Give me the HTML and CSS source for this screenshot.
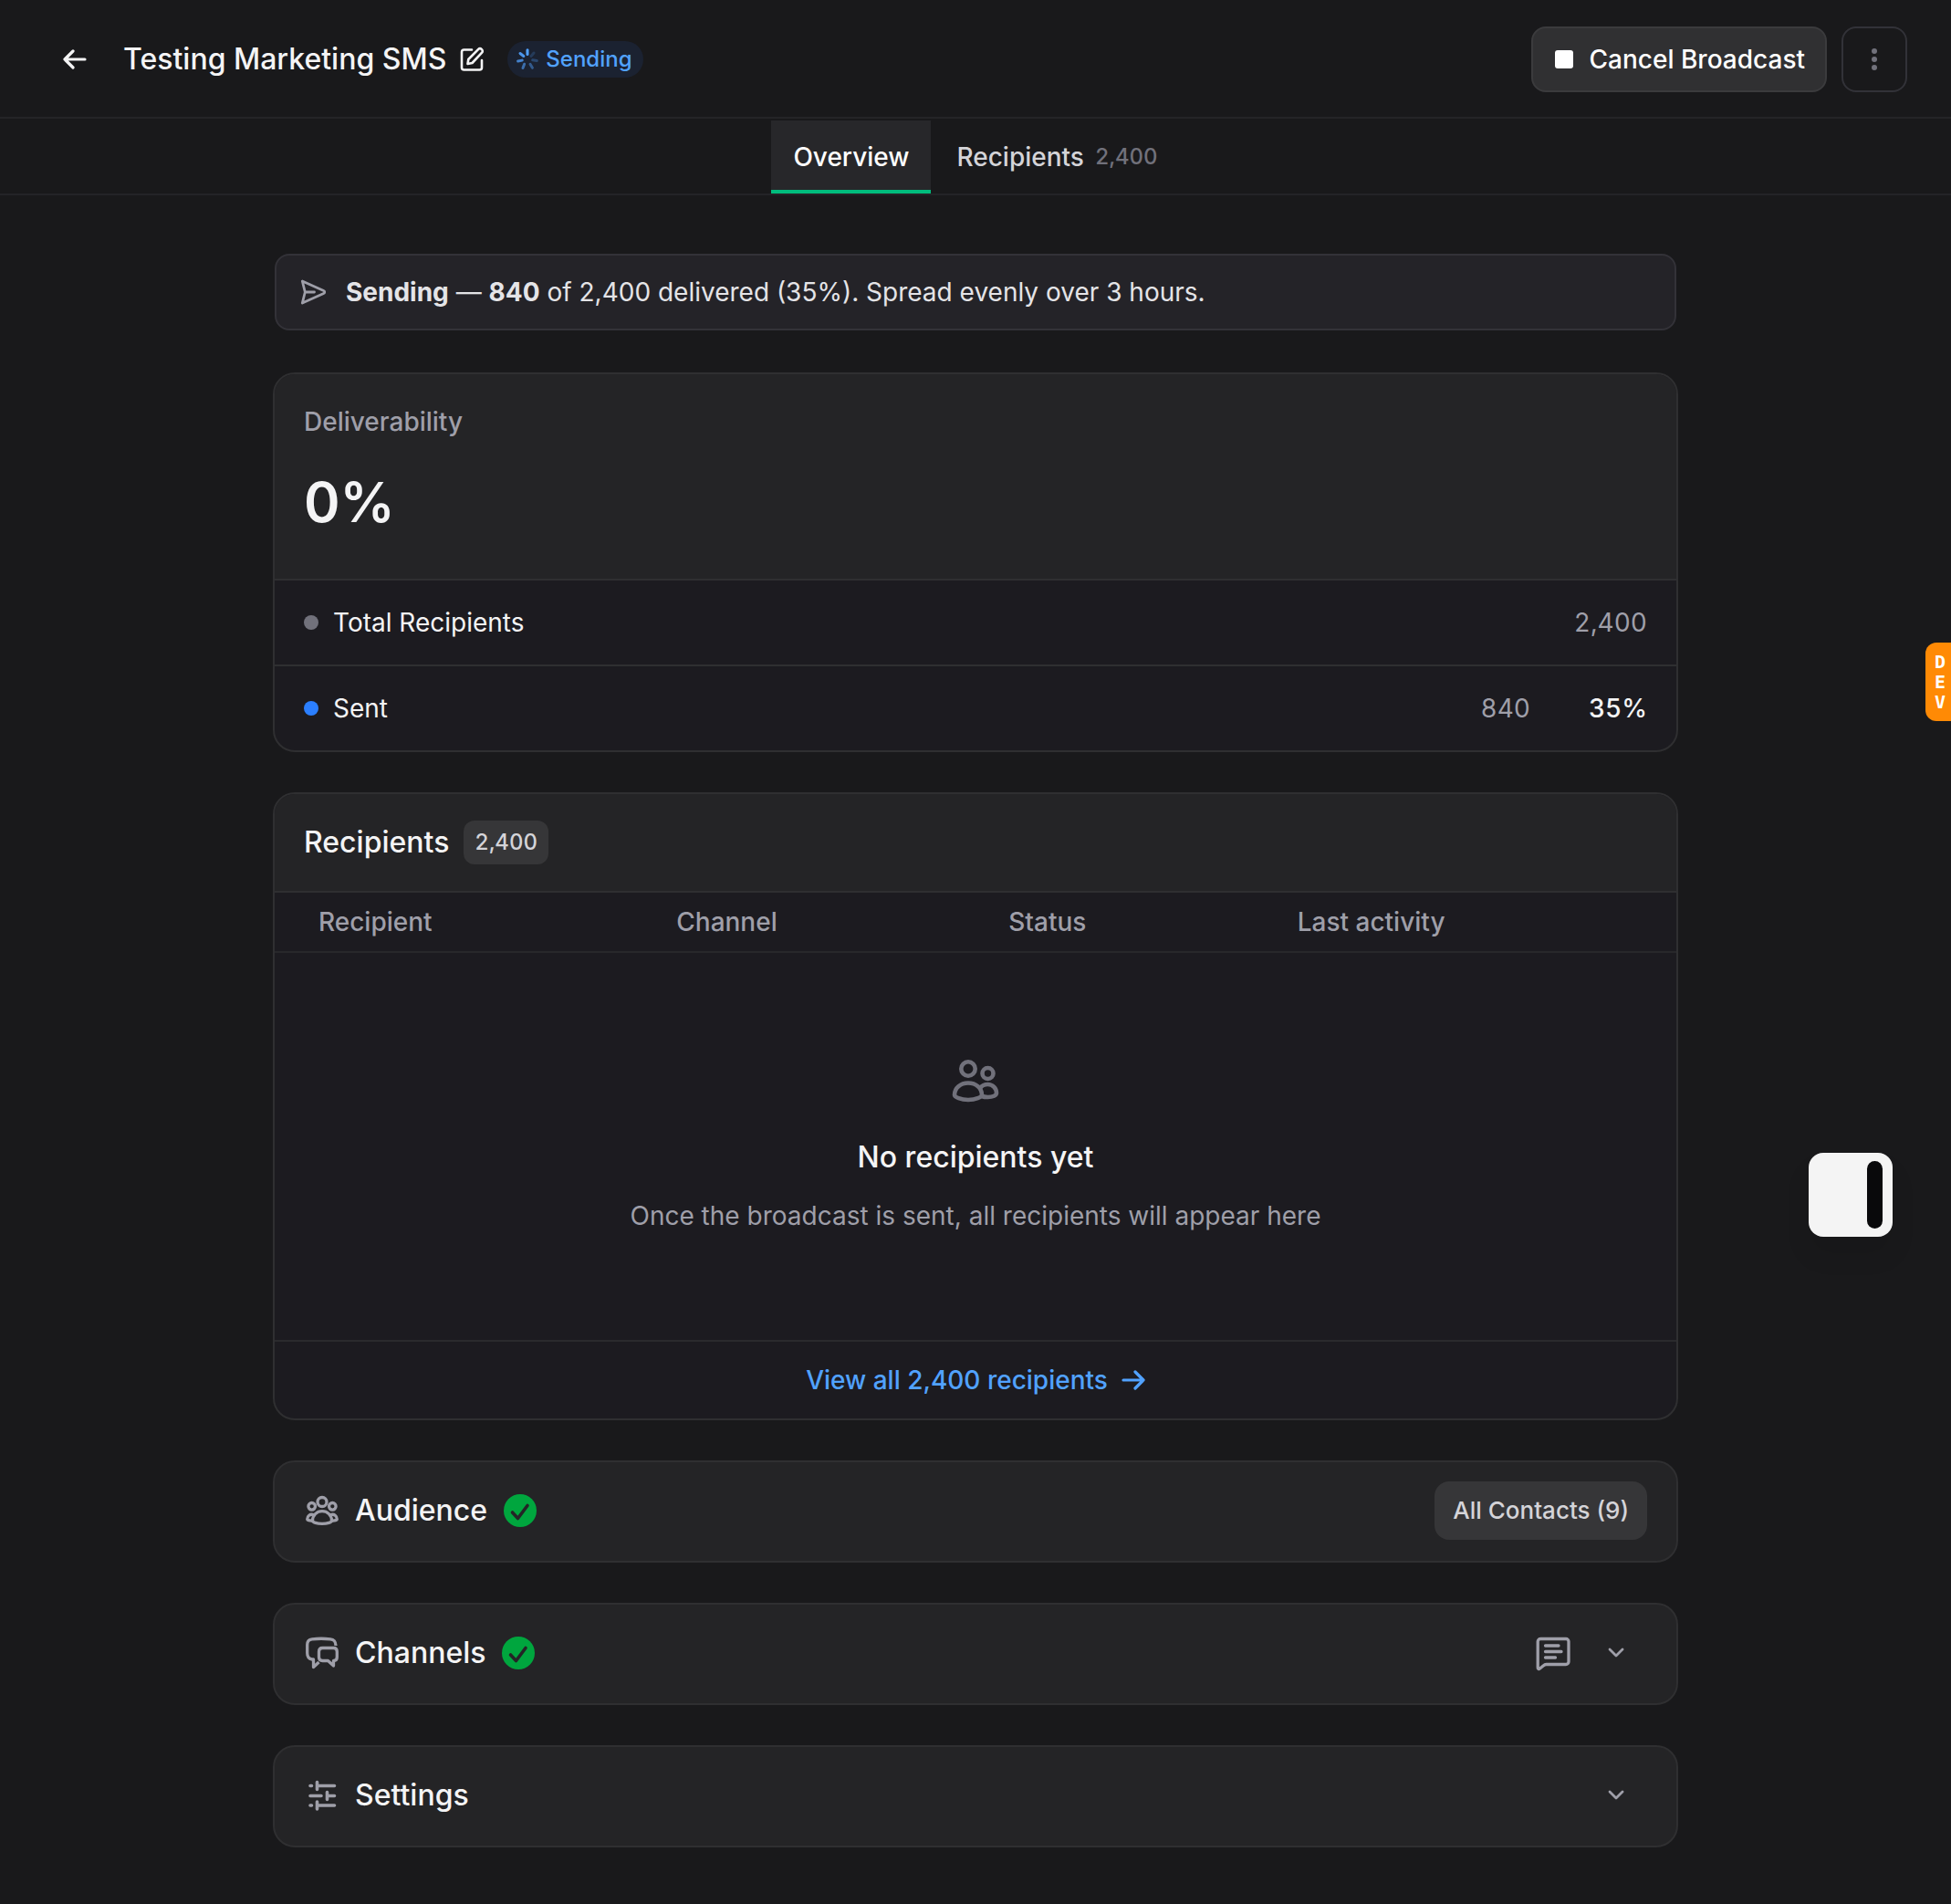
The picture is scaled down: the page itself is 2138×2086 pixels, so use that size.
FILE: index.html
```html
<!DOCTYPE html>
<html lang="en">
  <head>
    <meta charset="utf-8">
    <title>Testing Marketing SMS</title>
    <link rel="stylesheet" href="styles.css">
  </head>
  <body>
    <header class="topbar">
      <a class="back" href="#" aria-label="Back">
        <svg width="26" height="22" viewBox="0 0 26 22" fill="none" stroke="currentColor" stroke-width="3.200" stroke-linecap="round" stroke-linejoin="round"><path d="M24 11H2M11 2L2 11L11 20"/></svg>
      </a>
      <h1 class="page-title">Testing Marketing SMS</h1>
      <button class="edit" type="button" aria-label="Rename">
        <svg width="28" height="28" viewBox="0 0 28 28" fill="none" stroke="currentColor" stroke-width="2.600" stroke-linecap="round" stroke-linejoin="round"><path d="M13 3.500H4.500A2.500 2.500 0 0 0 2 6v17a2.500 2.500 0 0 0 2.500 2.500h17A2.500 2.500 0 0 0 24 23v-8"/><path d="M8.500 19l.8-5L20.300 2.800a2.300 2.300 0 0 1 3.300 0l.5.500a2.300 2.300 0 0 1 0 3.300L13.500 18z"/></svg>
      </button>
      <span class="status">
        <svg width="24" height="24" viewBox="0 0 24 24" fill="none" stroke="currentColor" stroke-width="3" stroke-linecap="round">
          <path d="M12 1.800v4.700"/>
          <path d="M19 5l-3 3.500" opacity=".2"/>
          <path d="M22.300 13.600l-4.600-.8" opacity=".3"/>
          <path d="M17.400 21.300l-2.400-4" opacity=".45"/>
          <path d="M7 21.500l1.600-4.300" opacity=".6"/>
          <path d="M1.600 14l4.600-.9" opacity=".75"/>
          <path d="M4 5.500l3.800 3" opacity=".9"/>
        </svg>
        Sending
      </span>
      <div class="actions">
        <button class="btn btn-cancel" type="button"><span class="stop"></span>Cancel Broadcast</button>
        <button class="btn btn-more" type="button" aria-label="More">
          <svg width="6" height="24" viewBox="0 0 6 24" fill="currentColor"><circle cx="3" cy="3" r="3"/><circle cx="3" cy="12" r="3"/><circle cx="3" cy="21" r="3"/></svg>
        </button>
      </div>
    </header>

    <nav class="tabs">
      <a class="tab active" href="#">Overview</a>
      <a class="tab" href="#">Recipients <span class="tab-count">2,400</span></a>
    </nav>

    <main>
      <div class="alert">
        <svg width="28" height="28" viewBox="0 0 28 28" fill="none" stroke="currentColor" stroke-width="2.800" stroke-linecap="round" stroke-linejoin="round"><path d="M2.300 2l23.400 10.500a1.600 1.600 0 0 1 0 3L2.300 26l3-12zM5.500 14h10"/></svg>
        <p><strong>Sending</strong> — <strong>840</strong> of 2,400 delivered (35%). Spread evenly over 3 hours.</p>
      </div>

      <section class="card">
        <div class="metric">
          <h2 class="metric-label">Deliverability</h2>
          <div class="metric-value">0%</div>
        </div>
        <div class="stat">
          <span class="dot"></span>
          <span>Total Recipients</span>
          <span class="count">2,400</span>
        </div>
        <div class="stat">
          <span class="dot sent"></span>
          <span>Sent</span>
          <span class="count">840</span>
          <span class="percent">35%</span>
        </div>
      </section>

      <section class="card">
        <div class="card-head">
          <h2 class="title">Recipients</h2>
          <span class="badge">2,400</span>
        </div>
        <table>
          <thead>
            <tr>
              <th class="col-recipient">Recipient</th>
              <th class="col-channel">Channel</th>
              <th class="col-status">Status</th>
              <th>Last activity</th>
            </tr>
          </thead>
          <tbody>
            <tr>
              <td colspan="4">
                <div class="empty">
                  <svg width="52" height="48" viewBox="0 0 52 48" fill="none" stroke="currentColor" stroke-width="4.600" stroke-linejoin="round"><circle cx="18" cy="11" r="7.700"/><circle cx="39.500" cy="16" r="6"/><path d="M3 39.500C3 32 9.500 26.500 18 26.500S33 32 33 39.500c0 2.500-7 5.500-15 5.500S3 42 3 39.500z"/><path d="M31 32c1.800-2.300 4.800-4 8.500-4 5.500 0 9.500 4.500 9.500 9.500 0 2.600-4 4.500-9.500 4.500-2.500 0-4.800-.3-6.500-1"/></svg>
                  <h3 class="title">No recipients yet</h3>
                  <p>Once the broadcast is sent, all recipients will appear here</p>
                </div>
              </td>
            </tr>
          </tbody>
        </table>
        <a class="view-all" href="#">
          View all 2,400 recipients
          <svg width="26" height="22" viewBox="0 0 26 22" fill="none" stroke="currentColor" stroke-width="3.200" stroke-linecap="round" stroke-linejoin="round"><path d="M2 11h22M15 2l9 9-9 9"/></svg>
        </a>
      </section>

      <section class="card section">
        <svg class="section-icon" width="40" height="40" viewBox="0 0 40 40" fill="none" stroke="currentColor" stroke-width="3.300" stroke-linejoin="round"><circle cx="20" cy="10.500" r="5"/><circle cx="8.700" cy="15.300" r="3.800"/><circle cx="31.300" cy="15.300" r="3.800"/><path d="M9.500 31c0-6 4.700-10.300 10.500-10.300S30.500 25 30.500 31c0 1.800-4.700 3.300-10.500 3.300S9.500 32.800 9.500 31z"/><path d="M11 24.700c-4.500-1.500-7.300 1.300-7.300 4.800 0 1 2.300 1.700 5.800 1.500M29 24.700c4.500-1.500 7.300 1.300 7.300 4.800 0 1-2.300 1.700-5.800 1.500"/></svg>
        <h2 class="title">Audience</h2>
        <svg class="check" width="36" height="36" viewBox="0 0 36 36" fill="none"><circle cx="18" cy="18" r="18" fill="#00a63e"/><path d="M9.500 20l6 6.500L26 12.500" stroke="#242426" stroke-width="3.600" stroke-linecap="round" stroke-linejoin="round"/></svg>
        <span class="pill">All Contacts (9)</span>
      </section>

      <section class="card section">
        <svg class="section-icon" width="40" height="40" viewBox="0 0 40 40" fill="none" stroke="currentColor" stroke-width="3.300" stroke-linejoin="round"><path d="M35 12C34.800 7 33 5.200 29 4.800 22 4 16 4 9 4.800 5 5.200 3.700 7.500 3.700 11v9c0 4 1.500 6.500 5.300 7h1.500v8.500l6-5.500"/><path d="M20.500 14.500h12c2.500 0 3.800 1.500 3.800 4V24.500c0 2.500-1.300 4-3.800 4v5.500l-6-5.500h-6c-2.500 0-4-1.500-4-4v-6c0-2.500 1.500-4 4-4z"/></svg>
        <h2 class="title">Channels</h2>
        <svg class="check" width="36" height="36" viewBox="0 0 36 36" fill="none"><circle cx="18" cy="18" r="18" fill="#00a63e"/><path d="M9.500 20l6 6.500L26 12.500" stroke="#242426" stroke-width="3.600" stroke-linecap="round" stroke-linejoin="round"/></svg>
        <div class="section-end">
          <svg width="40" height="40" viewBox="-1 0 40 40" fill="none" stroke="currentColor" stroke-width="3.300" stroke-linecap="round" stroke-linejoin="round"><path d="M6 4.500h28a3 3 0 0 1 3 3v22a3 3 0 0 1-3 3H12.500a4 4 0 0 0-3 1.300L5.500 37a1.300 1.300 0 0 1-2.300-1V7.500a3 3 0 0 1 3-3zM11.500 12H26M11.500 18.500H29M11.500 25H22.500"/></svg>
          <button class="toggle" type="button" aria-label="Expand channels">
            <svg width="18" height="12" viewBox="0 0 18 12" fill="none" stroke="currentColor" stroke-width="2.800" stroke-linecap="round" stroke-linejoin="round"><path d="M2 2l7 7 7-7"/></svg>
          </button>
        </div>
      </section>

      <section class="card section">
        <svg class="section-icon" width="40" height="40" viewBox="0 0 40 40" fill="none" stroke="currentColor" stroke-width="3.600" stroke-linecap="round"><path d="M7 9.500h1.500M15 9.500H33.500M14.500 5.500v8M7 20.500H19M26.500 20.500h7M25.500 16.500v8M7 31h1.500M15 31H33.500M14.500 27v8"/></svg>
        <h2 class="title">Settings</h2>
        <div class="section-end">
          <button class="toggle" type="button" aria-label="Expand settings">
            <svg width="18" height="12" viewBox="0 0 18 12" fill="none" stroke="currentColor" stroke-width="2.800" stroke-linecap="round" stroke-linejoin="round"><path d="M2 2l7 7 7-7"/></svg>
          </button>
        </div>
      </section>
    </main>

    <div class="dev-tag"><span>D</span><span>E</span><span>V</span></div>
    <button class="panel-toggle" type="button" aria-label="Toggle panel"><span></span></button>
  </body>
</html>
```
FILE: styles.css
```css
* {
  box-sizing: border-box;
}

body {
  margin: 0;
  min-height: 100vh;
  background: #19191b;
  color: #f4f4f5;
  font-family: Inter, "Liberation Sans", sans-serif;
  font-size: 28px;
  line-height: 40px;
}

h1, h2, h3, p {
  margin: 0;
}

a {
  color: inherit;
  text-decoration: none;
}

button {
  padding: 0;
  border: none;
  background: none;
  color: inherit;
  font: inherit;
}

svg {
  display: block;
  flex: none;
}

/* top bar */
.topbar {
  display: flex;
  align-items: center;
  height: 130px;
  padding: 2px 48px 0 69px;
  border-bottom: 2px solid #242427;
}

.back {
  margin-right: 40px;
}

.page-title,
.title {
  font-size: 32px;
  font-weight: 500;
  line-height: 48px;
}

.edit {
  margin: 0 24px 0 15px;
}

.status {
  display: flex;
  align-items: center;
  gap: 8px;
  height: 40px;
  padding: 0 12px 0 10px;
  border-radius: 20px;
  background: #1b2231;
  color: #51a2ff;
  font-size: 24px;
  font-weight: 500;
}

.actions {
  display: flex;
  gap: 16px;
  margin-left: auto;
}

.btn {
  display: flex;
  align-items: center;
  justify-content: center;
  height: 72px;
  border: 2px solid #323238;
  border-radius: 16px;
  font-weight: 500;
}

.btn-cancel {
  gap: 18px;
  padding: 0 22px 0 24px;
  border-color: #3b3b3d;
  background: #303032;
  color: #fff;
}

.stop {
  width: 20px;
  height: 20px;
  border-radius: 3px;
  background: #fff;
}

.btn-more {
  width: 72px;
  color: #71717b;
}

/* tabs */
.tabs {
  display: flex;
  justify-content: center;
  gap: 4px;
  height: 84px;
  padding-top: 2px;
  border-bottom: 2px solid #242427;
}

.tab {
  display: flex;
  align-items: center;
  gap: 12px;
  padding: 4px 24px 0;
  border-bottom: 4px solid transparent;
  color: #d4d4d8;
  font-weight: 500;
}

.tab.active {
  border-bottom-color: #00bc7d;
  background: #27272a;
  color: #fff;
}

.tab-count {
  color: #71717b;
  font-size: 24px;
  font-variant-numeric: tabular-nums;
}

/* content */
main {
  display: flex;
  flex-direction: column;
  gap: 44px;
  max-width: 1540px;
  margin: 0 auto;
  padding: 64px 0;
}

.alert {
  display: flex;
  align-items: center;
  gap: 22px;
  margin: 0 2px 2px;
  padding: 20px 26px;
  border: 2px solid #333238;
  border-radius: 16px;
  background: #242328;
  color: #e4e4e7;
}

.alert svg {
  color: #9f9fa9;
}

.alert strong {
  font-weight: 700;
}

.card {
  overflow: hidden;
  border: 2px solid #2f2f31;
  border-radius: 24px;
  background: #1c1b20;
}

.metric {
  height: 224px;
  padding: 32px;
  background: #242426;
}

.metric-label {
  color: #9f9fa9;
  font-size: 28px;
  font-weight: 500;
}

.metric-value {
  margin-top: 32px;
  font-size: 60px;
  font-weight: 600;
  line-height: 72px;
}

.stat {
  display: flex;
  align-items: center;
  gap: 16px;
  padding: 26px 32px;
  border-top: 2px solid #2f2f31;
}

.dot {
  width: 16px;
  height: 16px;
  border-radius: 50%;
  background: #71717b;
}

.dot.sent {
  background: #2b7fff;
}

.count,
.percent {
  font-variant-numeric: tabular-nums;
}

.count {
  margin-left: auto;
  color: #9f9fa9;
}

.percent {
  width: 112px;
  font-weight: 500;
  text-align: right;
}

.card-head {
  display: flex;
  align-items: center;
  gap: 16px;
  padding: 29px 32px;
  background: #242426;
}

.badge {
  padding: 4px 12px;
  border-radius: 12px;
  background: #363638;
  color: #d4d4d8;
  font-size: 24px;
  font-weight: 500;
  font-variant-numeric: tabular-nums;
}

table {
  width: 100%;
  border-collapse: collapse;
  table-layout: fixed;
}

th {
  height: 66px;
  padding: 0 24px;
  border-top: 2px solid #2f2f31;
  border-bottom: 2px solid #28282b;
  color: #9f9fa9;
  font-weight: 500;
  text-align: left;
}

td {
  padding: 0;
}

.col-recipient {
  width: 27.1%;
  padding-left: 48px;
}

.col-channel {
  width: 23.7%;
}

.col-status {
  width: 20.6%;
}

.empty {
  display: flex;
  flex-direction: column;
  align-items: center;
  padding: 116px 32px;
}

.empty svg {
  color: #71717b;
}

.empty .title {
  margin-top: 36px;
}

.empty p {
  margin-top: 20px;
  color: #9f9fa9;
}

.view-all {
  display: flex;
  align-items: center;
  justify-content: center;
  gap: 15px;
  height: 86px;
  border-top: 2px solid #2a2a2d;
  color: #51a2ff;
  font-weight: 500;
}

.section {
  display: flex;
  align-items: center;
  gap: 16px;
  height: 112px;
  padding: 0 32px 2px;
  background: #242426;
}

.section-icon,
.section-end {
  color: #9f9fa9;
}

.check {
  margin-left: 2px;
}

.pill {
  margin-left: auto;
  padding: 12px 20px;
  border-radius: 16px;
  background: #363638;
  color: #d4d4d8;
  font-size: 26px;
  font-weight: 500;
}

.section-end {
  display: flex;
  align-items: center;
  gap: 16px;
  margin-left: auto;
}

.toggle {
  display: flex;
  align-items: center;
  justify-content: center;
  width: 68px;
  height: 64px;
}

/* floating tools */
.dev-tag {
  position: fixed;
  top: 704px;
  right: 0;
  display: flex;
  flex-direction: column;
  width: 28px;
  padding: 10px 0 10px 10px;
  border-radius: 12px 0 0 12px;
  background: #ff8a05;
  color: #fff;
  font-family: "DejaVu Sans Mono", monospace;
  font-size: 20px;
  font-weight: 700;
  line-height: 22px;
}

.panel-toggle {
  position: fixed;
  top: 1263px;
  right: 64px;
  display: flex;
  justify-content: flex-end;
  width: 92px;
  height: 92px;
  padding: 9px 11px;
  border-radius: 16px;
  background: #f4f4f4;
  box-shadow: 0 20px 28px rgba(0, 0, 0, 0.08);
}

.panel-toggle span {
  width: 17px;
  border-radius: 9px;
  background: #09090b;
}
```
